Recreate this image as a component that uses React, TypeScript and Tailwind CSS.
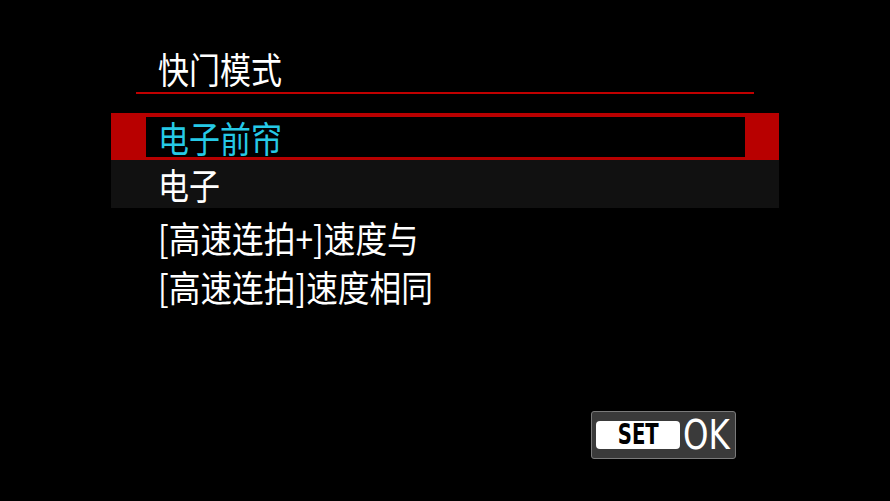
export default function App() {
  const cjk = { fontFamily: '"Noto Sans CJK SC", "Noto Sans", sans-serif' };
  const cond = { fontFamily: '"DejaVu Sans Condensed", "DejaVu Sans", sans-serif' };

  return (
    <div className="w-[890px] h-[501px] bg-black flex flex-col overflow-hidden" style={cjk}>
      {/* Title */}
      <div className="pl-[158px] pt-[46px] h-[92px] text-white text-[36px] leading-[44px]">
        <span className="inline-block origin-left scale-x-[0.86]">快门模式</span>
      </div>
      <div className="ml-[136px] w-[618px] h-[2px] bg-[#c00000]" />

      {/* Options */}
      <div className="mt-[19px] ml-[111px] w-[668px] flex flex-col">
        <div className="h-[47px] bg-[#b80000] pt-[4px] pb-[3px] pl-[35px] pr-[34px]">
          <div className="h-full bg-black pl-[12px] flex items-center text-[#26c9e6] text-[36px] leading-none">
            <span className="inline-block origin-left scale-x-[0.86]">电子前帘</span>
          </div>
        </div>
        <div className="h-[48px] bg-[#111111] pl-[47px] flex items-center text-white text-[36px] leading-none">
          <span className="inline-block origin-left scale-x-[0.86]">电子</span>
        </div>
      </div>

      {/* Description */}
      <div className="mt-[5px] pl-[158px] text-white text-[36px] leading-[49px]">
        <div className="origin-left scale-x-[0.88]">[高速连拍+]速度与</div>
        <div className="origin-left scale-x-[0.88]">[高速连拍]速度相同</div>
      </div>

      {/* SET OK */}
      <div className="mt-auto mb-[42px] ml-[591px] w-[145px] h-[48px] bg-[#3a3a3a] border border-[#7a7a7a] rounded-[3px] flex items-center pl-[4px] gap-[3px]">
        <div
          className="w-[85px] h-[28px] bg-white rounded-[4px] flex items-center justify-center text-black text-[28px] font-bold leading-none"
          style={cond}
        >
          <span className="inline-block scale-x-[0.78]">SET</span>
        </div>
        <div className="text-white text-[40px] leading-none" style={cond}>
          <span className="inline-block origin-left scale-x-[0.9]">OK</span>
        </div>
      </div>
    </div>
  );
}
